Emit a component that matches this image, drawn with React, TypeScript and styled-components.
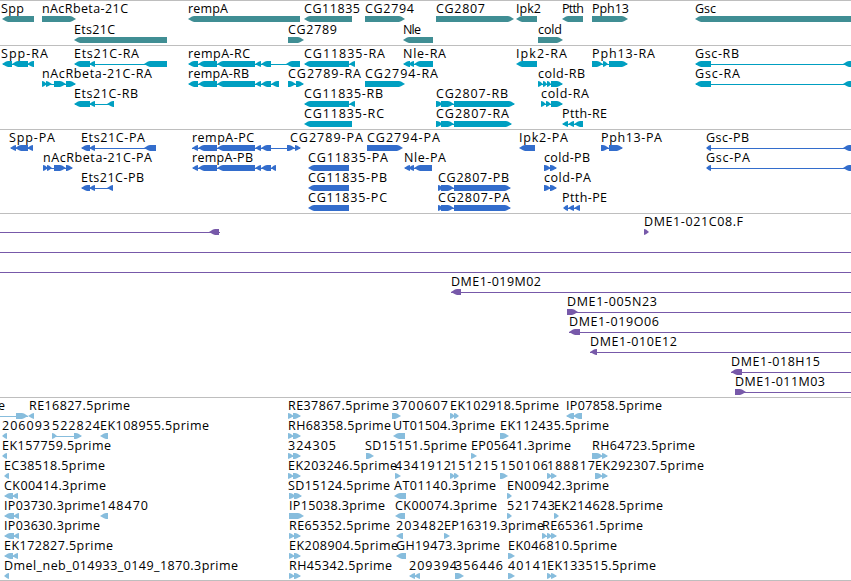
import React from "react";
import styled, { createGlobalStyle } from "styled-components";

const GlobalStyle = createGlobalStyle`
  body {
    margin: 0;
    background: #fff;
    overflow: hidden;
  }
`;

const Browser = styled.main`
  display: flex;
  flex-direction: column;
  width: 851px;
  height: 581px;
  box-sizing: border-box;
  overflow: hidden;
  border-bottom: 1px solid #bebebe;
`;

const Track = styled.section<{ $color: string; $gap: number }>`
  display: flex;
  flex-direction: column;
  flex: none;
  border-top: 1px solid #bebebe;
  padding-bottom: ${(p) => p.$gap}px;
  color: ${(p) => p.$color};
`;

const LaneCanvas = styled.svg<{ $height: number }>`
  display: block;
  flex: none;
  width: 851px;
  height: ${(p) => p.$height}px;
  overflow: visible;
`;

const Label = styled.text`
  fill: #000;
  font-family: "Open Sans", "Noto Sans", sans-serif;
  font-size: 12.5px;
  white-space: pre;
`;

const Exon = styled.polygon`
  fill: currentColor;
`;

const Intron = styled.rect`
  fill: currentColor;
  shape-rendering: crispEdges;
`;

type Strand = "L" | "R";
type Span = [number, number];
interface Feature {
  name: string;
  from: number;
  to: number;
  strand: Strand;
  exons: Span[];
  line?: Span;
}

const f = (
  name: string,
  from: number,
  to: number,
  strand: Strand,
  exons: Span[],
  line?: Span
): Feature => ({ name, from, to, strand, exons, line });

const END = 860;
const gscTail: Span = [843, 853];
const rempA: Span[] = [[198, 217], [217, 255], [255, 261], [261, 271]];
const fivePrime: Span[] = [[288, 294], [293, 301]];
const fivePrimeB: Span[] = [[289, 295], [294, 301]];

const genes: Feature[][] = [
  [
    f("Spp", 1, 24, "L", [[2, 34]]),
    f("nAcRbeta-21C", 42, 128, "R", [[42, 76]]),
    f("rempA", 188, 228, "L", [[188, 300]]),
    f("CG11835", 304, 360, "L", [[304, 352]]),
    f("CG2794", 365, 414, "R", [[365, 405]]),
    f("CG2807", 436, 485, "R", [[436, 514]]),
    f("Ipk2", 516, 541, "L", [[516, 537]]),
    f("Ptth", 562, 584, "L", [[562, 583]]),
    f("Pph13", 592, 629, "R", [[592, 628]]),
    f("Gsc", 695, 716, "L", [[695, END]]),
  ],
  [
    f("Ets21C", 74, 115, "L", [[74, 167]]),
    f("CG2789", 288, 337, "R", [[288, 304]]),
    f("Nle", 403, 421, "L", [[403, 433]]),
    f("cold", 538, 562, "R", [[538, 563]]),
  ],
];

const transcripts: Feature[][] = [
  [
    f("Spp-RA", 1, 48, "L", [[2, 12], [12, 28], [27, 34]]),
    f("Ets21C-RA", 74, 139, "L", [[74, 90], [89, 95], [144, 167]]),
    f("rempA-RC", 188, 250, "L", [[188, 198], ...rempA, [286, 300]]),
    f("CG11835-RA", 304, 385, "L", [[304, 349], [349, 355]]),
    f("Nle-RA", 403, 446, "L", [[403, 410], [408, 414], [414, 433]]),
    f("Ipk2-RA", 516, 567, "L", [[516, 537]]),
    f("Pph13-RA", 592, 655, "R", [[592, 603], [603, 608], [609, 628]]),
    f("Gsc-RB", 695, 739, "L", [[695, 711], gscTail]),
  ],
  [
    f("nAcRbeta-21C-RA", 42, 152, "R", [[42, 47], [46, 52], [54, 66], [66, 76]]),
    f("rempA-RB", 188, 249, "L", [[188, 198], ...rempA, [271, 279]]),
    f("CG2789-RA", 288, 361, "R", [[288, 296], [296, 304]]),
    f("CG2794-RA", 365, 438, "R", [[365, 405]]),
    f("cold-RB", 538, 585, "R", [[538, 543], [543, 547], [547, 551], [551, 563]]),
    f("Gsc-RA", 695, 740, "L", [[695, 711], gscTail]),
  ],
  [
    f("Ets21C-RB", 74, 138, "L", [[74, 90], [89, 95], [107, 114]]),
    f("CG11835-RB", 304, 383, "L", [[304, 349], [349, 355]]),
    f("CG2807-RB", 436, 508, "R", [[436, 443], [441, 454], [454, 515]]),
    f("cold-RA", 541, 589, "R", [[541, 546], [546, 551], [551, 563]]),
  ],
  [
    f("CG11835-RC", 304, 384, "L", [[304, 352]]),
    f("CG2807-RA", 436, 509, "R", [[436, 443], [441, 454], [454, 512]]),
    f("Ptth-RE", 562, 607, "L", [[562, 568], [568, 574], [574, 583]]),
  ],
];

const proteins: Feature[][] = [
  [
    f("Spp-PA", 9, 55, "L", [[10, 16], [15, 28], [27, 33]]),
    f("Ets21C-PA", 81, 145, "L", [[81, 90], [89, 95], [144, 156]]),
    f("rempA-PC", 192, 254, "L", [[192, 198], ...rempA], [192, 288]),
    f("CG2789-PA", 290, 363, "R", [[287, 295], [295, 301]]),
    f("CG2794-PA", 367, 440, "R", [[367, 403]]),
    f("Ipk2-PA", 519, 568, "L", [[519, 535]]),
    f("Pph13-PA", 601, 662, "R", [[601, 609], [609, 623]]),
    f("Gsc-PB", 706, 749, "L", [[706, 711], gscTail]),
  ],
  [
    f("nAcRbeta-21C-PA", 43, 152, "R", [[43, 48], [47, 52], [54, 66], [66, 73]]),
    f("rempA-PB", 192, 253, "L", [[192, 198], ...rempA, [271, 276]]),
    f("CG11835-PA", 308, 388, "L", [[308, 349]]),
    f("Nle-PA", 404, 446, "L", [[404, 410], [408, 414], [414, 432]]),
    f("cold-PB", 544, 590, "R", [[544, 551], [550, 557]]),
    f("Gsc-PA", 706, 750, "L", [[706, 711], gscTail]),
  ],
  [
    f("Ets21C-PB", 81, 144, "L", [[81, 90], [89, 95], [107, 113]]),
    f("CG11835-PB", 308, 387, "L", [[308, 349]]),
    f("CG2807-PB", 438, 509, "R", [[438, 443], [441, 454], [454, 511]]),
    f("cold-PA", 544, 591, "R", [[544, 551], [550, 557]]),
  ],
  [
    f("CG11835-PC", 308, 387, "L", [[308, 349]]),
    f("CG2807-PA", 438, 510, "R", [[438, 443], [441, 454], [454, 511]]),
    f("Ptth-PE", 562, 607, "L", [[563, 568], [568, 574], [574, 580]]),
  ],
];

const clones: Feature[][] = [
  [
    f("", 0, 0, "L", [[209, 219]], [0, 220]),
    f("DME1-021C08.F", 644, 743, "R", [[644, 649]]),
  ],
  [f("", 0, 0, "L", [], [0, END])],
  [f("", 0, 0, "L", [], [0, END])],
  [f("DME1-019M02", 451, 541, "L", [[451, 461]], [451, END])],
  [f("DME1-005N23", 567, 657, "R", [[567, 578]], [567, END])],
  [f("DME1-019O06", 569, 659, "L", [[569, 580]], [569, END])],
  [f("DME1-010E12", 590, 677, "L", [[590, 597]], [590, END])],
  [f("DME1-018H15", 731, 820, "L", [[731, 742]], [731, END])],
  [f("DME1-011M03", 735, 825, "R", [[735, 746]], [735, END])],
];

const ests: Feature[][] = [
  [
    f("e", -2, 5, "R", [[16, 28]], [0, 28]),
    f("RE16827.5prime", 29, 130, "L", [[28, 34]]),
    f("RE37867.5prime", 288, 389, "R", fivePrime),
    f("3700607", 392, 448, "R", [[392, 401]]),
    f("EK102918.5prime", 450, 559, "R", [[450, 455], [454, 459]]),
    f("IP07858.5prime", 566, 662, "L", [[566, 574], [573, 582]]),
  ],
  [
    f("206093", 2, 50, "L", [[2, 7]]),
    f("522824", 52, 100, "R", [[52, 57], [74, 82]]),
    f("EK108955.5prime", 100, 209, "L", [[100, 108]]),
    f("RH68358.5prime", 288, 391, "R", fivePrime),
    f("UT01504.3prime", 393, 495, "L", [[393, 405]]),
    f("EK112435.5prime", 500, 609, "R", [[500, 509]]),
  ],
  [
    f("EK157759.5prime", 2, 111, "L", [[2, 7]]),
    f("324305", 288, 336, "R", fivePrime),
    f("SD15151.5prime", 365, 467, "R", [[366, 374]]),
    f("EP05641.3prime", 471, 571, "R", [[471, 477]]),
    f("RH64723.5prime", 592, 695, "R", [[592, 603], [602, 608]]),
  ],
  [
    f("EC38518.5prime", 4, 105, "L", [[4, 9]]),
    f("EK203246.5prime", 288, 397, "R", fivePrime),
    f("4341912", 395, 451, "R", [[395, 401]]),
    f("151215", 450, 498, "R", [[450, 455], [454, 459]]),
    f("150106", 500, 548, "R", [[500, 508]]),
    f("188817", 547, 595, "R", [[547, 552], [551, 557]]),
    f("EK292307.5prime", 595, 704, "R", [[595, 603], [602, 608]]),
  ],
  [
    f("CK00414.3prime", 4, 106, "L", [[4, 13], [12, 18]]),
    f("SD15124.5prime", 288, 390, "R", [[289, 296], [294, 302]]),
    f("AT01140.3prime", 394, 496, "L", [[394, 406]]),
    f("EN00942.3prime", 507, 609, "R", [[507, 512]]),
  ],
  [
    f("IP03730.3prime", 4, 100, "L", [[4, 14], [13, 19]]),
    f("148470", 100, 148, "L", [[100, 108]]),
    f("IP15038.3prime", 289, 385, "R", [[289, 304]]),
    f("CK00074.3prime", 395, 497, "L", [[395, 405]]),
    f("521743", 507, 555, "R", [[507, 512]]),
    f("EK214628.5prime", 554, 663, "R", [[554, 559]]),
  ],
  [
    f("IP03630.3prime", 4, 100, "L", [[4, 14], [13, 19]]),
    f("RE65352.5prime", 289, 390, "R", fivePrimeB),
    f("203482", 396, 444, "L", [[396, 403]]),
    f("EP16319.3prime", 444, 544, "R", [[444, 450]]),
    f("RE65361.5prime", 542, 643, "R", [[542, 547], [547, 552], [551, 557]]),
  ],
  [
    f("EK172827.5prime", 4, 113, "L", [[4, 13], [12, 18]]),
    f("EK208904.5prime", 289, 398, "R", fivePrimeB),
    f("GH19473.3prime", 396, 500, "L", [[396, 406]]),
    f("EK046810.5prime", 508, 617, "R", [[508, 515]]),
  ],
  [
    f("Dmel_neb_014933_0149_1870.3prime", 4, 238, "L", [[4, 9]]),
    f("RH45342.5prime", 289, 392, "R", fivePrimeB),
    f("209394", 409, 457, "L", [[409, 415], [414, 420]]),
    f("356446", 455, 503, "R", [[455, 464]]),
    f("40141", 508, 548, "R", [[508, 515]]),
    f("EK133515.5prime", 547, 656, "R", [[547, 552], [551, 557]]),
  ],
];

const tracks = [
  { id: "genes", color: "#408e94", lane: 21, gap: 2, lanes: genes },
  { id: "transcripts", color: "#009fc1", lane: 20, gap: 3, lanes: transcripts },
  { id: "proteins", color: "#336dcc", lane: 20, gap: 3, lanes: proteins },
  { id: "clones", color: "#7759a9", lane: 20, gap: 3, lanes: clones },
  { id: "ests", color: "#87bddd", lane: 20, gap: 2, lanes: ests },
];

/* Block with a tapered head on the side it is transcribed towards. */
function arrow([a, b]: Span, strand: Strand) {
  const head = Math.min(6, b - a);
  return strand === "L"
    ? `${a},18 ${a + head - 2},15.6 ${a + head},15 ${b},15 ${b},21 ${a + head},21 ${a + head - 2},20.2`
    : `${b},18 ${b - head + 2},15.6 ${b - head},15 ${a},15 ${a},21 ${b - head},21 ${b - head + 2},20.2`;
}

function Glyph({ feature }: { feature: Feature }) {
  const { name, from, to, strand, exons } = feature;
  const line: Span | undefined =
    feature.line ?? (exons.length > 1 ? [exons[0][0] + 1, exons[exons.length - 1][1] - 1] : undefined);
  return (
    <g>
      {line && <Intron x={line[0]} y={18} width={line[1] - line[0]} height={1} />}
      {exons.map((e) => (
        <Exon key={e[0]} points={arrow(e, strand)} />
      ))}
      {name && (
        <Label x={from} y={12} textLength={to - from} lengthAdjust="spacing">
          {name}
        </Label>
      )}
    </g>
  );
}

export default function App() {
  return (
    <>
      <GlobalStyle />
      <Browser>
        {tracks.map((t) => (
          <Track key={t.id} $color={t.color} $gap={t.gap}>
            {t.lanes.map((lane, i) => (
              <LaneCanvas key={i} $height={t.lane}>
                {lane.map((feature, j) => (
                  <Glyph key={j} feature={feature} />
                ))}
              </LaneCanvas>
            ))}
          </Track>
        ))}
      </Browser>
    </>
  );
}
